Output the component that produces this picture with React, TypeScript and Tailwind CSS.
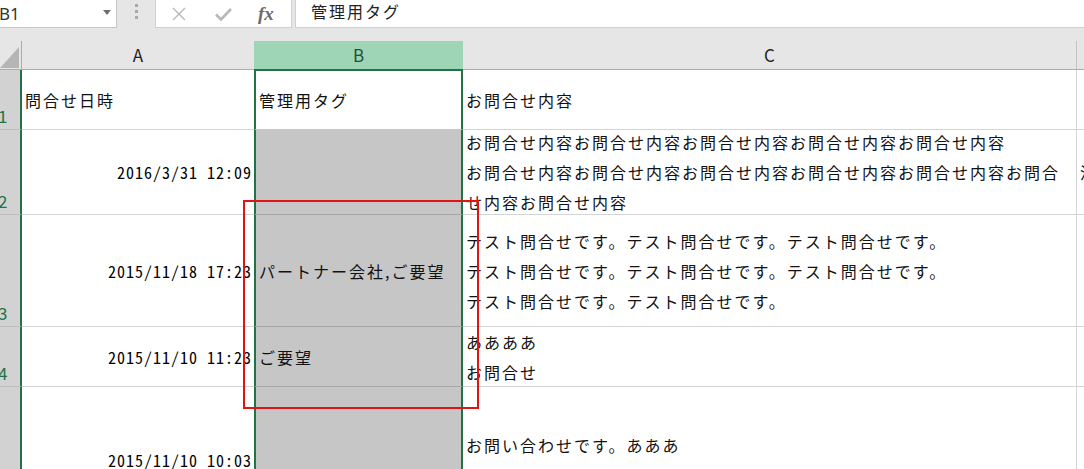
import React from "react";

type RowData = {
  n: string;
  h: string;
  date: string;
  tag: string;
  lines: string[];
  d?: string;
};

const ROWS: RowData[] = [
  {
    n: "2",
    h: "h-[85px]",
    date: "2016/3/31 12:09",
    tag: "",
    lines: [
      "お問合せ内容お問合せ内容お問合せ内容お問合せ内容お問合せ内容",
      "お問合せ内容お問合せ内容お問合せ内容お問合せ内容お問合せ内容お問合",
      "せ内容お問合せ内容",
    ],
    d: "済",
  },
  {
    n: "3",
    h: "h-[112px]",
    date: "2015/11/18 17:23",
    tag: "パートナー会社,ご要望",
    lines: [
      "テスト問合せです。テスト問合せです。テスト問合せです。",
      "テスト問合せです。テスト問合せです。テスト問合せです。",
      "テスト問合せです。テスト問合せです。",
    ],
  },
  {
    n: "4",
    h: "h-[60px]",
    date: "2015/11/10 11:23",
    tag: "ご要望",
    lines: ["ああああ", "お問合せ"],
  },
  {
    n: "5",
    h: "h-[146px]",
    date: "2015/11/10 10:03",
    tag: "",
    lines: ["お問い合わせです。あああ", "\u00a0"],
  },
];

function FormulaBar() {
  return (
    <div className="flex h-[41px] items-start bg-[#e6e6e6]">
      <div className="relative flex h-[28px] w-[117px] shrink-0 items-center border-r border-b border-[#c6c6c6] bg-white">
        <span className="-ml-[1px] font-['Noto_Sans',sans-serif] text-[17px] text-[#333]">B1</span>
        <svg className="absolute left-[103px] top-[10px]" width="8" height="5" viewBox="0 0 8 5">
          <path d="M0 0h8L4 5z" fill="#6f6f6f" />
        </svg>
      </div>
      <div className="flex h-[28px] w-[38px] shrink-0 flex-col items-center justify-start gap-[3px] pt-[4px]">
        <span className="h-[3px] w-[3px] bg-[#a9a9a9]" />
        <span className="h-[3px] w-[3px] bg-[#a9a9a9]" />
        <span className="h-[3px] w-[3px] bg-[#a9a9a9]" />
      </div>
      <div className="flex h-[28px] w-[137px] shrink-0 items-center border-x border-b border-[#d0d0d0] bg-white">
        <svg className="ml-[16px]" width="14" height="14" viewBox="0 0 14 14">
          <path d="M1 1l12 12M13 1L1 13" stroke="#b8b8b8" strokeWidth="1.4" />
        </svg>
        <svg className="ml-[29px]" width="17" height="14" viewBox="0 0 17 14">
          <path d="M1 7.5l5 5L16 2" stroke="#b8b8b8" strokeWidth="2.6" fill="none" />
        </svg>
        <span className="ml-[26px] font-['Liberation_Serif',serif] text-[19px] font-bold italic leading-none text-[#6b6b6b]">
          fx
        </span>
      </div>
      <div className="ml-[3px] flex h-[28px] flex-1 items-center border-l border-b border-[#d0d0d0] bg-white pl-[15px]">
        <span className="-mt-[5px] text-[16px] tracking-[2px] text-[#222]">管理用タグ</span>
      </div>
    </div>
  );
}

function ColumnHeaders() {
  return (
    <div className="flex h-[29px] text-[17px] text-[#222]">
      <div className="relative w-[22px] shrink-0 border-r border-b border-[#ababab] bg-[#e6e6e6]">
        <svg className="absolute left-0 top-[6px]" width="19" height="21" viewBox="0 0 19 21">
          <path d="M0 21L19 0v21z" fill="#b5b5b5" />
        </svg>
      </div>
      <div className="flex w-[232px] shrink-0 items-center justify-center border-b border-[#ababab] bg-[#e6e6e6]">
        A
      </div>
      <div className="flex w-[209px] shrink-0 items-center justify-center border-b border-[#217346] bg-[#9fd5b7] text-[#1d5236]">
        B
      </div>
      <div className="flex w-[614px] shrink-0 items-center justify-center border-r border-b border-r-[#c4c4c4] border-b-[#ababab] bg-[#e6e6e6]">
        C
      </div>
      <div className="flex-1 border-b border-[#ababab] bg-[#e6e6e6]" />
    </div>
  );
}

function RowHeader({ n }: { n: string }) {
  return (
    <div className="flex w-[22px] shrink-0 items-end overflow-hidden border-r-2 border-b border-r-[#217346] border-b-[#bcbcbc] bg-[#d2d2d2] pb-[2px]">
      <span className="-ml-[2px] text-[17px] leading-[22px] text-[#217346]">{n}</span>
    </div>
  );
}

function DataRow({ row }: { row: RowData }) {
  return (
    <div className={`flex ${row.h}`}>
      <RowHeader n={row.n} />
      <div className="flex w-[232px] shrink-0 items-center justify-end border-b border-[#d4d4d4] pr-[2px]">
        <span className="text-[16px] tracking-[1px] whitespace-nowrap text-black [font-feature-settings:'hwid']">
          {row.date}
        </span>
      </div>
      <div className="flex w-[209px] shrink-0 items-center border-x-2 border-b border-x-[#217346] border-b-[#a6a6a6] bg-[#c6c6c6] pl-[3px]">
        <span className="text-[16px] tracking-[2px] whitespace-nowrap">{row.tag}</span>
      </div>
      <div className="flex w-[614px] shrink-0 flex-col justify-center border-r border-b border-[#d4d4d4] pl-[3px]">
        {row.lines.map((line, i) => (
          <div key={i} className="text-[16px] leading-[30px] tracking-[2px] whitespace-nowrap">
            {line}
          </div>
        ))}
      </div>
      <div className="flex flex-1 items-center overflow-hidden border-b border-[#d4d4d4] pl-[3px]">
        <span className="text-[16px] tracking-[2px] whitespace-nowrap">{row.d}</span>
      </div>
    </div>
  );
}

export default function App() {
  return (
    <div className="relative h-[469px] w-[1084px] overflow-hidden bg-white font-['Noto_Sans_CJK_JP',sans-serif] text-[#111]">
      <FormulaBar />
      <ColumnHeaders />

      <div className="flex h-[60px]">
        <RowHeader n="1" />
        <div className="flex w-[232px] shrink-0 items-center border-b border-[#d4d4d4] pl-[3px]">
          <span className="text-[16px] tracking-[2px]">問合せ日時</span>
        </div>
        <div className="flex w-[209px] shrink-0 items-center border-x-2 border-t border-b border-x-[#217346] border-t-[#217346] border-b-[#c6c6c6] bg-white pl-[3px]">
          <span className="text-[16px] tracking-[2px]">管理用タグ</span>
        </div>
        <div className="flex w-[614px] shrink-0 items-center border-r border-b border-[#d4d4d4] pl-[3px]">
          <span className="text-[16px] tracking-[2px]">お問合せ内容</span>
        </div>
        <div className="flex-1 border-b border-[#d4d4d4]" />
      </div>

      {ROWS.map((row) => (
        <DataRow key={row.n} row={row} />
      ))}

      {/* annotation box drawn over the sheet */}
      <div className="pointer-events-none absolute left-[243px] top-[200px] h-[209px] w-[236px] border-2 border-[#e21313]" />
    </div>
  );
}
